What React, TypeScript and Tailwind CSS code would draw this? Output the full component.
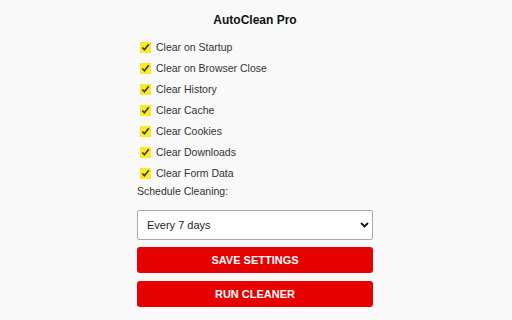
import React from 'react';

const OPTIONS = [
  'Clear on Startup',
  'Clear on Browser Close',
  'Clear History',
  'Clear Cache',
  'Clear Cookies',
  'Clear Downloads',
  'Clear Form Data',
];

export default function App() {
  return (
    <div className="min-h-screen bg-[#f9f9f9] pr-[2px] font-['Liberation_Sans',Arial,sans-serif] text-[#222]">
      <div className="w-[236px] mx-auto pt-[13px]">
        <h1 className="text-center text-[12px] leading-[14px] font-bold text-[#111]">AutoClean Pro</h1>

        <div className="mt-[10px] flex flex-col">
          {OPTIONS.map(o => (
            <label key={o} className="flex items-center h-[21px] pl-[3px] gap-[5px] text-[10.5px] text-[#333]">
              <input type="checkbox" defaultChecked className="m-0 w-[11px] h-[11px] accent-[#ffeb1a]" />
              <span>{o}</span>
            </label>
          ))}
        </div>

        <div className="text-[10.5px] leading-[14px] text-[#333]">Schedule Cleaning:</div>

        {/* 일정 선택 */}
        <div className="relative mt-[12px]">
          <select
            defaultValue="7"
            className="appearance-none w-full h-[30px] bg-white border border-[#a9a9a9] rounded-[2px] pl-[9px] text-[11px] text-[#222] outline-none"
          >
            <option value="1">Every day</option>
            <option value="7">Every 7 days</option>
            <option value="30">Every 30 days</option>
          </select>
          <svg className="absolute right-[4px] top-[12px] pointer-events-none" width="9" height="6" viewBox="0 0 9 6">
            <path d="M1 1l3.5 3.5L8 1" fill="none" stroke="#111" strokeWidth="1.8" />
          </svg>
        </div>

        <div className="mt-[7px] flex flex-col gap-[8px]">
          <button className="h-[26px] w-full rounded-[3px] bg-[#e60000] text-white text-[11px] font-bold uppercase">
            Save Settings
          </button>
          <button className="h-[26px] w-full rounded-[3px] bg-[#e60000] text-white text-[11px] font-bold uppercase">
            Run Cleaner
          </button>
        </div>
      </div>
    </div>
  );
}
